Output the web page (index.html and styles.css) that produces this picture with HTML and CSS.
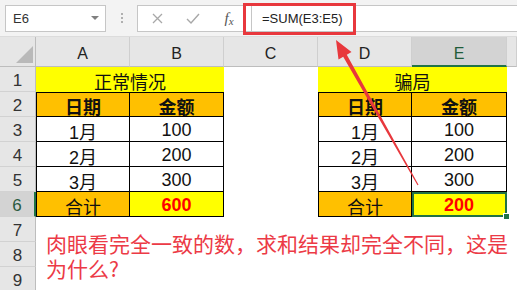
FILE: index.html
```html
<!DOCTYPE html>
<html>
<head>
<meta charset="utf-8">
<link rel="stylesheet" href="styles.css">
</head>
<body>
<div class="toolbar">
  <div class="namebox"><span>E6</span><span class="caret"></span></div>
  <div class="dots"><i></i><i></i><i></i></div>
  <div class="fbar">
    <div class="fbtns">
      <span class="btn"><svg width="11" height="11" viewBox="0 0 11 11"><path d="M1 1L10 10M10 1L1 10" stroke="#a8a8a8" stroke-width="1.3" fill="none"/></svg></span>
      <span class="btn"><svg width="14" height="11" viewBox="0 0 14 11"><path d="M1 6L5 10L13 1" stroke="#a8a8a8" stroke-width="1.4" fill="none"/></svg></span>
      <span class="btn fx">f<span class="fxs">x</span></span>
    </div>
    <div class="formula">=SUM(E3:E5)</div>
  </div>
</div>
<div class="sheet">
  <div class="corner"><svg width="17" height="17" viewBox="0 0 17 17"><path d="M17 0L17 17L0 17Z" fill="#b9b9b9"/></svg></div>
  <div class="ch">A</div><div class="ch">B</div><div class="ch">C</div><div class="ch">D</div><div class="ch chsel">E</div><div class="ch"></div>

  <div class="rh">1</div><div class="title">正常情况</div><div></div><div class="title">骗局</div><div></div>
  <div class="rh">2</div><div class="c l t hd">日期</div><div class="c t hd">金额</div><div></div><div class="c l t hd">日期</div><div class="c t hd">金额</div><div></div>
  <div class="rh">3</div><div class="c l">1月</div><div class="c">100</div><div></div><div class="c l">1月</div><div class="c">100</div><div></div>
  <div class="rh">4</div><div class="c l">2月</div><div class="c">200</div><div></div><div class="c l">2月</div><div class="c">200</div><div></div>
  <div class="rh">5</div><div class="c l">3月</div><div class="c">300</div><div></div><div class="c l">3月</div><div class="c">300</div><div></div>
  <div class="rh rhsel">6</div><div class="c l tot">合计</div><div class="c sum">600</div><div></div><div class="c l tot">合计</div><div class="c sum sel">200</div><div></div>
  <div class="rh">7</div><div class="note"><div>肉眼看完全一致的数，求和结果却完全不同，这是</div><div>为什么?</div></div>
  <div class="rh">8</div>
  <div class="rh">9</div>
</div>
<div class="callout"></div>
<svg class="arrow" width="517" height="290" viewBox="0 0 517 290">
  <polygon points="336,40 351.5,52 346.8,54.8 418.5,184.8 417.5,185.2 343.2,56.8 338.5,59.5" fill="#e8383d"/>
</svg>
</body>
</html>
```
FILE: styles.css
```css
body {
  margin: 0;
  width: 517px;
  height: 290px;
  overflow: hidden;
  background: #fff;
  position: relative;
  font-family: "Liberation Sans", "Noto Sans CJK SC", sans-serif;
}
.toolbar {
  display: flex;
  align-items: flex-start;
  height: 37px;
  box-sizing: border-box;
  padding: 5px 0 0 5px;
  background: #f3f3f3;
  border-bottom: 1px solid #dcdcdc;
}
.namebox {
  width: 101px;
  height: 27px;
  box-sizing: border-box;
  border: 1px solid #c6c6c6;
  background: #fff;
  display: flex;
  align-items: center;
  justify-content: space-between;
  padding: 0 6px 0 7px;
  font-size: 13px;
  color: #333;
}
.caret {
  width: 0;
  height: 0;
  border-left: 4px solid transparent;
  border-right: 4px solid transparent;
  border-top: 4px solid #808080;
  margin-top: -2px;
}
.dots {
  width: 31px;
  display: flex;
  flex-direction: column;
  align-items: center;
  gap: 2px;
  padding-top: 8px;
}
.dots i {
  display: block;
  width: 2px;
  height: 2px;
  background: #b0b0b0;
}
.fbar {
  flex: 1;
  height: 27px;
  box-sizing: border-box;
  border: 1px solid #c6c6c6;
  border-right: none;
  background: #fff;
  display: flex;
}
.fbtns {
  width: 113px;
  display: flex;
  align-items: center;
  padding-left: 1px;
  box-sizing: border-box;
}
.btn {
  width: 36px;
  display: flex;
  justify-content: center;
  align-items: center;
}
.fx {
  font-family: "Liberation Serif", serif;
  font-style: italic;
  font-size: 15px;
  color: #555;
}
.fxs {
  font-size: 11px;
  position: relative;
  top: 2px;
}
.formula {
  flex: 1;
  border-left: 1px solid #c6c6c6;
  padding-left: 10px;
  font-size: 13px;
  line-height: 25px;
  color: #222;
}
.sheet {
  display: grid;
  grid-template-columns: 36px 94px 94px 94px 94px 95px 1fr;
  grid-template-rows: 30px repeat(9, 25px);
}
.corner {
  background: #e6e6e6;
  border-right: 1px solid #bdbdbd;
  border-bottom: 1px solid #bdbdbd;
  display: flex;
  align-items: flex-end;
  justify-content: flex-end;
  padding: 0 2px 3px 0;
}
.corner svg { display: block; }
.ch {
  background: #e6e6e6;
  border-right: 1px solid #cfcfcf;
  border-bottom: 1px solid #bdbdbd;
  display: flex;
  align-items: center;
  justify-content: center;
  padding-top: 5px;
  font-size: 16px;
  color: #222;
}
.chsel {
  background: #d3d3d3;
  border-bottom: 2px solid #217346;
  color: #1f5c3a;
}
.rh {
  grid-column: 1;
  background: #e6e6e6;
  border-right: 1px solid #bdbdbd;
  border-bottom: 1px solid #d2d2d2;
  display: flex;
  align-items: center;
  justify-content: center;
  padding-top: 4px;
  font-size: 17px;
  color: #333;
}
.rhsel {
  background: #d3d3d3;
  border-right: 2px solid #217346;
  color: #2a5a40;
}
.title {
  grid-column: span 2;
  background: #ffff00;
  display: flex;
  align-items: center;
  justify-content: center;
  padding-top: 3px;
  font-size: 18px;
  color: #111;
}
.c {
  border-right: 1px solid #000;
  border-bottom: 1px solid #000;
  display: flex;
  align-items: center;
  justify-content: center;
  padding-top: 3px;
  font-size: 18px;
  color: #111;
  position: relative;
}
.l { border-left: 1px solid #000; }
.t { border-top: 1px solid #000; }
.hd {
  background: #ffc000;
  font-weight: bold;
}
.tot { background: #ffc000; }
.sum {
  background: #ffff00;
  color: #ff0000;
  font-weight: bold;
}
.sel::after {
  content: "";
  position: absolute;
  left: 0;
  top: 0;
  right: -1px;
  bottom: -1px;
  border: 2px solid #217346;
}
.sel::before {
  content: "";
  position: absolute;
  right: -4px;
  bottom: -4px;
  width: 5px;
  height: 5px;
  background: #217346;
  border: 1px solid #fff;
  z-index: 2;
}
.note {
  grid-column: 2 / -1;
  grid-row: span 3;
  display: flex;
  flex-direction: column;
  gap: 1px;
  padding: 14px 0 0 10px;
  font-family: "Noto Sans CJK SC", sans-serif;
  font-size: 21px;
  line-height: 24px;
  color: #ec3a46;
  white-space: nowrap;
}
.callout {
  position: absolute;
  left: 243px;
  top: 3px;
  width: 113px;
  height: 32px;
  box-sizing: border-box;
  border: 3px solid #e8383d;
}
.arrow {
  position: absolute;
  left: 0;
  top: 0;
  pointer-events: none;
}
```
